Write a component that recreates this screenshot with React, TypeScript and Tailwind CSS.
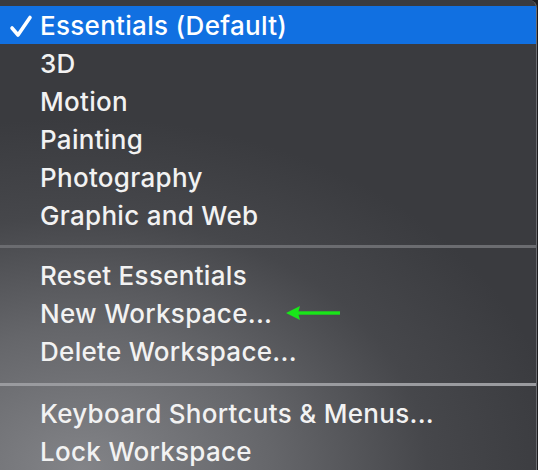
import React from "react";

const groups: string[][] = [
  ["3D", "Motion", "Painting", "Photography", "Graphic and Web"],
  ["Reset Essentials", "New Workspace...", "Delete Workspace..."],
  ["Keyboard Shortcuts & Menus...", "Lock Workspace"],
];

function Check() {
  return (
    <svg width="26" height="24" viewBox="0 0 26 24" className="absolute left-[8px] top-[8px]">
      <path
        d="M4 14 L10 21 L22 3.5"
        fill="none"
        stroke="white"
        strokeWidth="3.6"
        strokeLinecap="round"
        strokeLinejoin="round"
      />
    </svg>
  );
}

function GreenArrow() {
  return (
    <svg width="56" height="16" viewBox="0 0 56 16" className="ml-[14px]">
      <path d="M0 8 L14 1 L12 8 L14 15 Z" fill="#19e619" />
      <rect x="10" y="6.3" width="44" height="3.4" fill="#19e619" />
    </svg>
  );
}

function Row({ label }: { label: string }) {
  return (
    <div className="h-[38px] flex items-center pl-[40px] text-[26px] tracking-[0.3px] text-[#f2f2f2]">
      <span>{label}</span>
      {label === "New Workspace..." && <GreenArrow />}
    </div>
  );
}

export default function App() {
  return (
    <div className="w-[538px] h-[470px] bg-[#1c1c1e] overflow-hidden font-['Inter','Liberation_Sans',sans-serif] font-medium">
      <div className="w-[537px] h-[470px] rounded-tr-[8px] border-r border-[#6c6d72] pt-[6px] bg-[radial-gradient(ellipse_90%_75%_at_15%_100%,#838488_0%,#65666a_40%,#46474b_72%,#3a3b3f_100%)]">
        <div className="relative h-[38px] bg-[#1170e1] flex items-center pl-[40px] text-[26px] tracking-[0.3px] text-white">
          <Check />
          <span>Essentials (Default)</span>
        </div>
        {groups[0].map((l) => (
          <Row key={l} label={l} />
        ))}
        <div className="h-[3px] mt-[11px] mb-[8px] bg-[#6b6c70]" />
        {groups[1].map((l) => (
          <Row key={l} label={l} />
        ))}
        <div className="h-[3px] mt-[13px] mb-[8px] bg-[#9a9b9f]" />
        {groups[2].map((l) => (
          <Row key={l} label={l} />
        ))}
      </div>
    </div>
  );
}
